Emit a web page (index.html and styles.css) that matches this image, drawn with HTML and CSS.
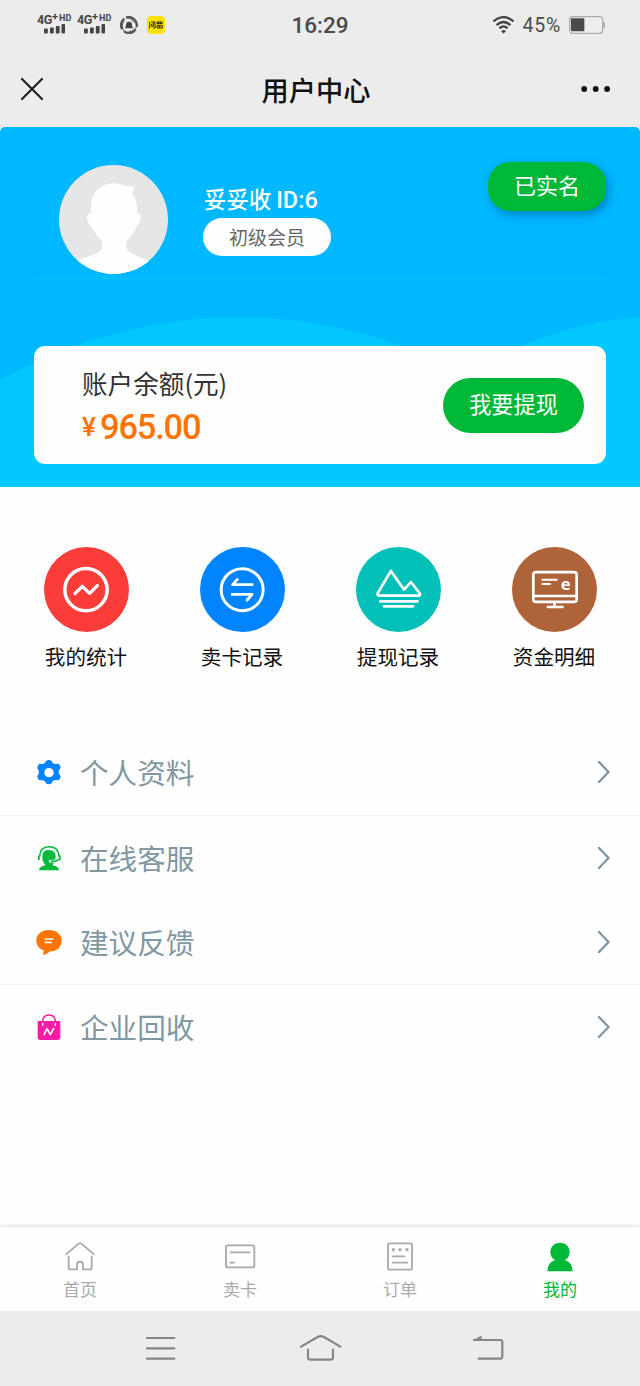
FILE: index.html
```html
<!DOCTYPE html>
<html lang="zh-CN">
<head>
<meta charset="utf-8">
<title>用户中心</title>
<link rel="stylesheet" href="styles.css">
</head>
<body>
<div class="phone">
  <div class="status">
    <div class="status-left">
      <div class="sim"><div class="net"><b>4G</b><i>+</i><em>HD</em></div>
        <svg width="21" height="10" viewBox="0 0 21 10" fill="#444"><rect x="0" y="4.500" width="3.800" height="5" rx="1"/><rect x="6" y="3.500" width="3.800" height="6" rx="1"/><rect x="11.800" y="2" width="3.800" height="7.500" rx="1"/><rect x="17.500" y="0" width="3.500" height="9.500" rx="1"/></svg></div>
      <div class="sim"><div class="net"><b>4G</b><i>+</i><em>HD</em></div>
        <svg width="21" height="10" viewBox="0 0 21 10" fill="#444"><rect x="0" y="4.500" width="3.800" height="5" rx="1"/><rect x="6" y="3.500" width="3.800" height="6" rx="1"/><rect x="11.800" y="2" width="3.800" height="7.500" rx="1"/><rect x="17.500" y="0" width="3.500" height="9.500" rx="1"/></svg></div>
      <svg class="ring" width="18" height="18" viewBox="0 0 54 54"><g fill="none" stroke="#555" stroke-width="7"><path d="M18 5A24 24 0 0 1 50 32"/><path d="M47 40A24 24 0 0 1 12 46"/><path d="M6 39A24 24 0 0 1 13 8"/></g><g fill="none" stroke="#555" stroke-width="3"><path d="M20 4Q36 6 43 20"/><path d="M50 32Q42 46 27 47"/><path d="M12 46Q2 30 12 14"/></g><path d="M14 37Q18 34 18 27Q18 17 27 17Q36 17 36 27Q36 34 40 37Z" fill="#444"/></svg>
      <svg class="app" width="18" height="18" viewBox="0 0 54 54"><rect width="54" height="54" rx="14" fill="#ffe100"/><g fill="none" stroke="#222" stroke-width="3"><path d="M8 37V18M12 18H24V36H19M14 24V31H19V20M29 18H47M29 23H47M30 29H46V36H30ZM33 18V24M42 18V24M38 29V36"/></g></svg>
    </div>
    <div class="time">16:29</div>
    <div class="status-right">
      <svg width="21" height="18" viewBox="0 0 60 51" fill="none" stroke="#444" stroke-width="6.500"><path d="M1.500 15Q30-9 58.500 15"/><path d="M10 26Q30 8 50 26"/><path d="M18.500 35Q30 24 41.500 35"/><path d="M30 50L23 43Q30 37 37 43Z" fill="#444" stroke="none"/></svg>
      <span class="pct">45%</span>
      <svg width="36" height="18" viewBox="0 0 108 54"><rect x="2" y="2" width="99" height="50" rx="10" fill="#eee" stroke="#aaa" stroke-width="4"/><path d="M103 18h2q3 1 3 4v10q0 3-3 4h-2z" fill="#aaa"/><rect x="6" y="7" width="40" height="39" rx="3" fill="#4a4a4a"/></svg>
    </div>
  </div>
  <header class="bar">
    <svg width="22" height="22" viewBox="0 0 66 66" stroke="#222" stroke-width="6.500" stroke-linecap="round"><path d="M3 3L63 63M63 3L3 63"/></svg>
    <h1>用户中心</h1>
    <svg width="30" height="6" viewBox="0 0 30 6" fill="#111"><circle cx="3.200" cy="3" r="2.900"/><circle cx="14.700" cy="3" r="2.900"/><circle cx="26.100" cy="3" r="2.900"/></svg>
  </header>

  <section class="hero">
    <svg class="waves" width="640" height="170" viewBox="0 317 640 170" fill="#00c8ff"><path d="M0 380A500 500 0 0 1 243 317A500 500 0 0 1 402 346L521 346Q580 321 640 317.500V487H0Z"/></svg>
    <div class="profile">
      <svg class="avatar" width="109" height="109" viewBox="87 74 327 327"><defs><clipPath id="face"><circle cx="250.500" cy="237.500" r="163.500"/></clipPath></defs><g clip-path="url(#face)"><rect x="87" y="74" width="327" height="327" fill="#e6e6e6"/><path d="M87 420V385Q140 361 158 354Q195 344 211 331Q218 325 217 304Q202 290 184 260Q170 244 171 230Q172 220 183 219Q179 174 199 151Q222 128 253 129Q270 129 278 134Q296 140 314 138Q312 149 306 156Q323 178 321 219Q332 221 333 230Q332 245 320 259Q304 290 288 304Q286 323 293 332Q309 344 350 358L414 385V420Z" fill="#fefefe"/></g></svg>
      <div class="who">
        <div class="name">妥妥收 <span>ID:6</span></div>
        <div class="level">初级会员</div>
      </div>
      <div class="verified">已实名</div>
    </div>
    <div class="balance">
      <div>
        <div class="balance-label">账户余额(元)</div>
        <div class="amount"><span>¥</span>965.00</div>
      </div>
      <div class="withdraw">我要提现</div>
    </div>
  </section>

  <nav class="shortcuts">
    <div class="shortcut"><svg viewBox="72 51 255 255"><circle cx="199.500" cy="178.500" r="127.500" fill="#fb3c39"/><g fill="none" stroke="#fff" stroke-linecap="round" stroke-linejoin="round"><circle cx="198" cy="179" r="63.500" stroke-width="10.500"/><path d="M165 191L187 169L209 190L232 167" stroke-width="10"/></g></svg>我的统计</div>
    <div class="shortcut"><svg viewBox="540 51 255 255"><circle cx="667.500" cy="178.500" r="127.500" fill="#0084ff"/><g fill="none" stroke="#fff" stroke-linejoin="round"><circle cx="666.500" cy="179" r="63" stroke-width="9"/><path d="M700 164H638L654 146M633 193H696L679 213" stroke-width="8.500"/></g></svg>卖卡记录</div>
    <div class="shortcut"><svg viewBox="76.500 51 255 255"><circle cx="204" cy="178.500" r="127.500" fill="#00c0b8"/><g fill="none" stroke="#fff" stroke-width="8" stroke-linecap="round" stroke-linejoin="round"><path d="M146 197Q139 196 142 189L181 123L221 179L241 156L268 190Q271 195 265 197ZM149 214H261M160 229H248"/></g></svg>提现记录</div>
    <div class="shortcut"><svg viewBox="543.500 51 255 255"><circle cx="671" cy="178.500" r="127.500" fill="#ae6338"/><g fill="none" stroke="#fff" stroke-width="8" stroke-linecap="round"><rect x="607.500" y="126.500" width="130" height="89" rx="8"/><path d="M608 198H738M671 216V231M651 231H695"/><path d="M635 149H678M635 162H658" stroke-width="6"/></g><text x="690" y="180" class="e-mark">e</text></svg>资金明细</div>
  </nav>

  <ul class="menu">
    <li class="lined"><svg class="ico" viewBox="47 56 78 78"><path fill="#0084ff" d="M77 62Q85 56 94 62L97 68Q102 72 108 71L115 70Q120 76 121 82L116 90Q114 96 117 101L121 108Q120 116 114 120L105 119Q100 120 97 123L94 129Q85 135 77 129L74 123Q69 119 63 120L56 119Q51 113 51 107L55 100Q57 95 54 90L51 83Q51 76 57 70L65 71Q70 72 74 67Z"/><circle cx="86" cy="97" r="14" fill="#fff"/></svg><span>个人资料</span><svg class="chev" viewBox="0 0 14 24"><path d="M2 2L11.500 12L2 22"/></svg></li>
    <li><svg class="ico" viewBox="47 313 78 78"><g fill="#00b83a"><path d="M66 343Q68 328 86 328Q107 329 106 349L104 357H90Q84 357 85 362Q86 367 91 366L101 365Q98 370 97 374Q116 378 116 389H56Q56 378 76 374Q64 362 66 343Z"/><rect x="53" y="344" width="5" height="15" rx="2"/><rect x="116" y="344" width="5" height="15" rx="2"/></g><path d="M58 348Q59 318 86 318Q115 318 116 348M116 355Q110 363 91 362" fill="none" stroke="#00b83a" stroke-width="4.500"/></svg><span>在线客服</span><svg class="chev" viewBox="0 0 14 24"><path d="M2 2L11.500 12L2 22"/></svg></li>
    <li class="lined"><svg class="ico" viewBox="47 56 78 78"><path fill="#ff7404" d="M86 59C108 59 124 72 124 91C124 110 108 123 90 123Q80 131 69 135L70 120C56 115 48 104 48 91C48 72 64 59 86 59Z"/><path d="M73 86H99M73 96H94" stroke="#fff" stroke-width="5"/></svg><span>建议反馈</span><svg class="chev" viewBox="0 0 14 24"><path d="M2 2L11.500 12L2 22"/></svg></li>
    <li><svg class="ico" viewBox="47 311 78 78"><path d="M67 337V331Q69 314 86 314Q103 314 105 331V337" fill="none" stroke="#f51da3" stroke-width="4.500"/><path fill="#f51da3" d="M54 332H117Q120 332 120 336V381Q120 389 112 389H60Q52 389 52 381V336Q52 332 54 332Z"/><path d="M67 337V346M105 337V346" stroke="#fff" stroke-width="4"/><path d="M71 373L80 355L90 373L100 355" fill="none" stroke="#fff" stroke-width="5" stroke-linecap="round" stroke-linejoin="round"/></svg><span>企业回收</span><svg class="chev" viewBox="0 0 14 24"><path d="M2 2L11.500 12L2 22"/></svg></li>
  </ul>

  <nav class="tabs">
    <div class="tab"><svg viewBox="192 77 96 96"><path d="M198 117L236 85Q240 82 244 85L282 117M206 124V157Q206 162 211 162H231V147Q232 139 240 139Q248 139 249 147V162H270Q275 162 275 157V124"/></svg>首页</div>
    <div class="tab"><svg viewBox="672 77 96 96"><path d="M683 90H758Q763 90 763 95V151Q763 156 758 156H683Q678 156 678 151V95Q678 90 683 90ZM692 111H749M691 142H702"/></svg>卖卡</div>
    <div class="tab"><svg viewBox="192 77 96 96"><path d="M209 84H271Q276 84 276 89V158Q276 163 271 163H209Q204 163 204 158V89Q204 84 209 84ZM218 123H253M218 142H262"/><g fill="#aaa" stroke="none"><circle cx="220" cy="103" r="5"/><circle cx="240" cy="103" r="5"/><circle cx="261" cy="103" r="5"/></g></svg>订单</div>
    <div class="tab active"><svg viewBox="672 77 96 96"><path class="solid" d="M720 82C737 82 749 94 749 110Q749 125 735 135Q756 140 758 168H682Q684 140 705 135Q691 125 691 110C691 94 703 82 720 82Z"/></svg>我的</div>
  </nav>
  <div class="sysnav">
    <svg viewBox="432 340 102 120"><path d="M441 370H523M441 401H523M441 432H523"/></svg>
    <svg class="wide" viewBox="-63 340 130 120"><path d="M-57 396L-7 367Q2 362 12 367L61 396M-36 405V428Q-36 435-29 435H32Q39 435 39 428V405"/></svg>
    <svg viewBox="453 340 102 120"><path d="M462 376H540Q547 376 547 383V425Q547 432 540 432H476"/><path d="M459 377L482 364Q486 363 485 369V378Z" fill="#858585" stroke="none"/></svg>
  </div>
</div>
</body>
</html>
```
FILE: styles.css
```css
* { box-sizing: border-box; }
body { margin: 0; background: #fefefe; font-family: "Noto Sans CJK SC", sans-serif; }
svg { display: block; flex: none; }
.phone { width: 640px; height: 1386px; display: flex; flex-direction: column; overflow: hidden; }

.status { height: 50px; flex: none; background: #ececec; color: #4a4a4a; display: grid; grid-template-columns: 240px 160px 240px; grid-template-rows: 50px; }
.status-left { display: flex; padding-left: 37px; height: 50px; align-items: flex-start; }
.sim { width: 40px; padding-top: 14px; }
.sim > svg { margin-left: 7px; }
.net { display: flex; height: 9.5px; width: 38px; align-items: flex-start; font-family: Roboto, sans-serif; line-height: 10px; color: #444; }
.net b { font-size: 12.500px; font-weight: 700; line-height: 11px; letter-spacing: -0.3px; }
.net i { font-size: 11px; font-style: normal; font-weight: 700; line-height: 6px; }
.net em { font-size: 9px; font-style: normal; font-weight: 700; line-height: 8px; margin-left: 1px; }
.ring { margin: 16px 0 0 3px; }
.app { margin: 16px 0 0 9px; }
.time { font-size: 22.500px; font-weight: 500; text-align: center; line-height: 51px; font-family: Roboto, sans-serif; }
.status-right { display: flex; align-items: center; justify-content: flex-end; padding-right: 35px; height: 50px; }
.pct { font-family: Roboto, sans-serif; font-size: 19.500px; margin: 2px 8px 0 8px; line-height: 30px; letter-spacing: .8px; }

.bar { height: 77px; flex: none; background: #ececec; display: flex; align-items: center; justify-content: space-between; padding: 0 29px 0 21px; }
.bar h1 { margin: 0; font-size: 27.200px; font-weight: 500; color: #111; line-height: 40px; padding-left: 8px; }

.hero { height: 360px; flex: none; background: #00b8ff; border-radius: 5px 5px 0 0; position: relative; padding: 0 34px; }
.waves { position: absolute; left: 0; bottom: 0; }
.profile { height: 152px; display: flex; position: relative; border-bottom: 1px solid #00c2ff; padding: 38px 0 0 25px; }
.who { margin-left: 35px; padding-top: 18px; flex: 1; }
.name { color: #fff; font-size: 22.4px; font-weight: 500; line-height: 31px; height: 35px; white-space: nowrap; padding-left: 1px; }
.name span { font-family: Roboto, sans-serif; font-size: 23.500px; }
.level { width: 128px; height: 38px; border-radius: 19px; background: #fefefe; color: #666; font-size: 19px; line-height: 37px; text-align: center; }
.verified { width: 118px; height: 49px; margin-top: -3px; border-radius: 22px; background: #00b838; color: #fff; font-size: 22px; line-height: 45px; text-align: center; box-shadow: 3px 4px 8px rgba(0, 60, 120, .4); }
.balance { position: relative; height: 118px; margin-top: 67px; background: #fefefe; border-radius: 11px; display: flex; align-items: center; justify-content: space-between; padding: 0 22px 0 48px; }
.balance-label { font-size: 25.6px; line-height: 38px; color: #333; white-space: nowrap; padding-top: 2px; }
.amount { font-family: Roboto, sans-serif; font-size: 34.500px; font-weight: 500; line-height: 48px; letter-spacing: -1.2px; color: #ff7300; display: flex; align-items: flex-start; padding-top: 1px; height: 46px; }
.amount span { font-size: 26px; width: 18px; line-height: 49px; }
.withdraw { width: 141px; height: 55px; border-radius: 28px; background: #00b838; color: #fff; font-size: 22.200px; line-height: 51px; text-align: center; }

.shortcuts { display: grid; grid-template-columns: repeat(4, 156px); padding: 60px 8px 0; height: 243px; flex: none; }
.shortcut { display: flex; flex-direction: column; align-items: center; font-size: 20.600px; line-height: 30px; color: #111; }
.shortcut svg { width: 85px; height: 85px; margin-bottom: 9px; }
.e-mark { font: 700 50px "Open Sans", sans-serif; fill: #fff; }

.menu { list-style: none; margin: 0; padding: 0; flex: 1; }
.menu li { height: 83.75px; display: flex; align-items: center; padding: 0 29px 0 35.5px; font-size: 28.600px; color: #8197a1; }
.menu li.lined { height: 85.75px; border-bottom: 1px solid #f1f3f4; }
.menu span { flex: 1; margin-left: 18.500px; line-height: 42px; }
.ico { width: 26px; height: 26px; }
.chev { width: 14px; height: 24px; fill: none; stroke: #8197a1; stroke-width: 2.4; stroke-linecap: round; stroke-linejoin: round; }

.tabs { height: 84px; flex: none; display: grid; grid-template-columns: repeat(4, 160px); background: #fefefe; box-shadow: 0 -1px 4px rgba(0, 0, 0, .15); position: relative; }
.tab { display: flex; flex-direction: column; align-items: center; padding-top: 14px; font-size: 17px; line-height: 24px; color: #aaa; }
.tab svg { width: 32px; height: 32px; margin-bottom: 4px; fill: none; stroke: #aaa; stroke-width: 5.500; stroke-linecap: round; stroke-linejoin: round; }
.tab.active { color: #00b838; }
.tab .solid { fill: #00b838; stroke: none; }
.sysnav { position: relative; height: 75px; flex: none; background: #ececec; display: flex; justify-content: space-between; padding: 17px 135px 0 144px; }
.sysnav svg { width: 34px; height: 40px; fill: none; stroke: #858585; stroke-width: 6.500; stroke-linecap: round; }
.sysnav svg.wide { width: 43.300px; margin-right: 7px; }
```
